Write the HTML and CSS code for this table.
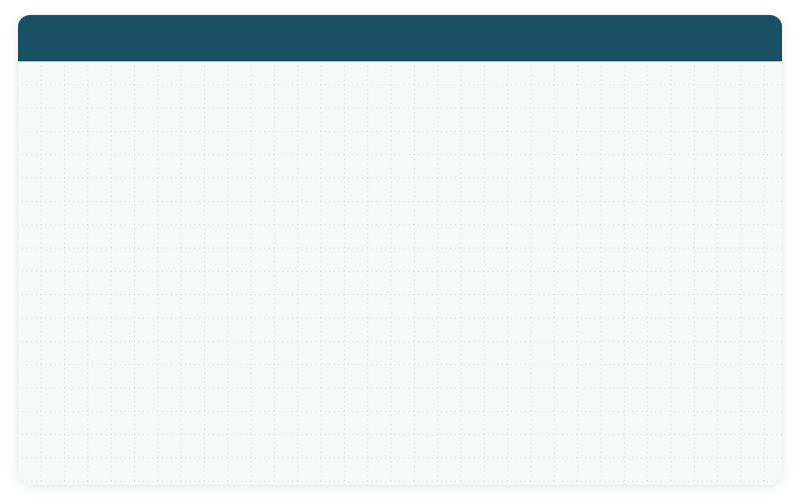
FILE: index.html
```html
<!DOCTYPE html>
<html lang="en">
<head>
<meta charset="utf-8">
<title>Canvas</title>
<link rel="stylesheet" href="styles.css">
</head>
<body>
<main class="card">
  <header class="card-header"></header>
  <section class="card-body"></section>
</main>
</body>
</html>
```
FILE: styles.css
```css
html, body {
  margin: 0;
  padding: 0;
  background: #ffffff;
  font-family: "Liberation Sans", Arial, sans-serif;
}
body {
  padding: 15px 18px 19px 18px;
  height: 504px;
  box-sizing: border-box;
  display: flex;
}
.card {
  flex: 1;
  display: flex;
  flex-direction: column;
  border-radius: 12px;
  overflow: hidden;
  background: #f7f9f9;
  box-shadow: 0 2px 14px rgba(30, 60, 70, 0.10), 0 0 2px rgba(30, 60, 70, 0.08);
}
.card-header {
  height: 45px;
  background: #1a5063;
  border-bottom: 1px solid #15475a;
  box-shadow: 0 1px 0 #a9c1c9;
  position: relative;
  z-index: 1;
}
.card-body {
  flex: 1;
  margin-top: 1px;
  background-color: #f7f9f9;
  background-image:
    conic-gradient(from 270deg at 1.3px 1.3px, #d3d6d6 90deg, transparent 0),
    conic-gradient(from 270deg at 1.3px 1.3px, #d3d6d6 90deg, transparent 0);
  background-size: 4.6667px 23.3333px, 23.3333px 4.6667px;
  background-position: -0.63px -1.03px, -0.63px -1.03px;
}
```
